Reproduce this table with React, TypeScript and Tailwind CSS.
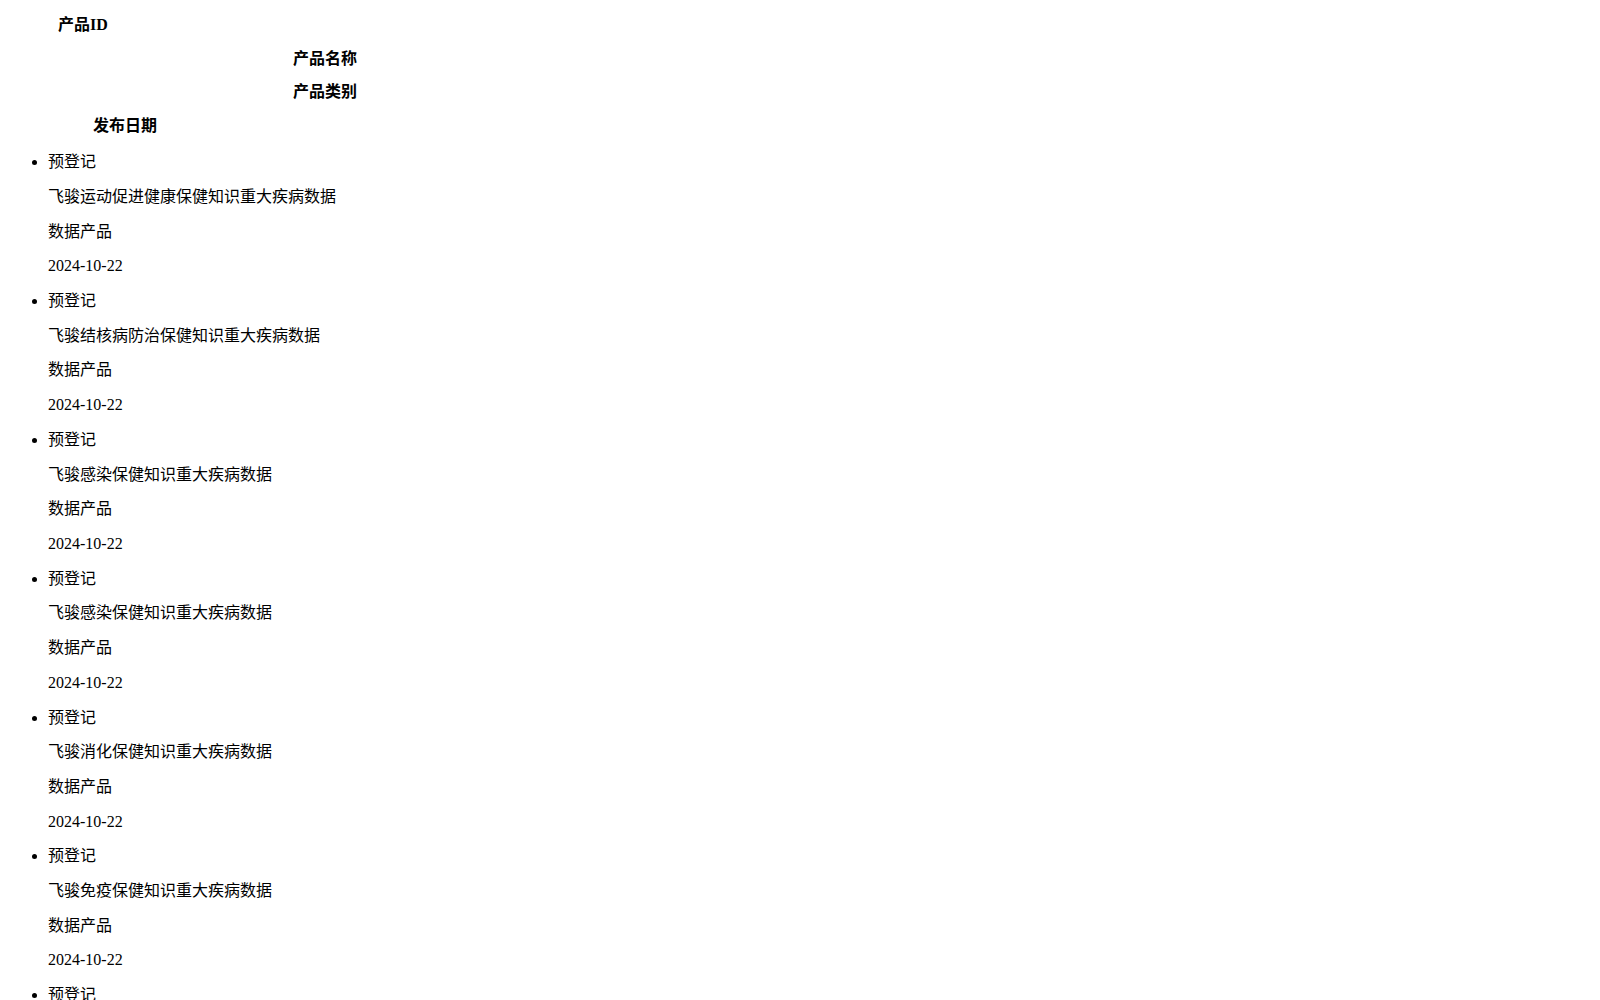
import React from "react";

type Product = {
  status: string;
  name: string;
  category: string;
  date: string;
};

const NAMES = [
  "飞骏运动促进健康保健知识重大疾病数据",
  "飞骏结核病防治保健知识重大疾病数据",
  "飞骏感染保健知识重大疾病数据",
  "飞骏感染保健知识重大疾病数据",
  "飞骏消化保健知识重大疾病数据",
  "飞骏免疫保健知识重大疾病数据",
  "飞骏心血管保健知识重大疾病数据",
  "飞骏呼吸保健知识重大疾病数据",
  "飞骏肿瘤保健知识重大疾病数据",
  "飞骏内分泌保健知识重大疾病数据",
  "飞骏神经保健知识重大疾病数据",
  "飞骏肾脏保健知识重大疾病数据",
  "飞骏眼科保健知识重大疾病数据",
  "飞骏口腔保健知识重大疾病数据",
  "飞骏皮肤保健知识重大疾病数据",
  "飞骏妇幼保健知识重大疾病数据",
  "飞骏老年保健知识重大疾病数据",
  "飞骏营养保健知识重大疾病数据",
  "飞骏心理保健知识重大疾病数据",
  "飞骏骨科保健知识重大疾病数据",
  "飞骏血液保健知识重大疾病数据",
  "飞骏肝病保健知识重大疾病数据",
  "飞骏传染病保健知识重大疾病数据",
  "飞骏慢病管理保健知识重大疾病数据",
];

const products: Product[] = NAMES.map((name) => ({
  status: "预登记",
  name,
  category: "数据产品",
  date: "2024-10-22",
}));

const font = "font-['Liberation_Serif','Noto_Sans_CJK_SC',serif]";

export default function App() {
  return (
    <div
      className={`h-screen overflow-y-scroll bg-white text-black text-[16px] ${font} [&::-webkit-scrollbar]:w-[15px] [&::-webkit-scrollbar-track]:bg-[#f1f1f1] [&::-webkit-scrollbar-thumb]:bg-[#c1c1c1] [&::-webkit-scrollbar-thumb]:border-x-[2px] [&::-webkit-scrollbar-thumb]:border-solid [&::-webkit-scrollbar-thumb]:border-[#f1f1f1]`}
    >
      {/* header labels */}
      <div className="pt-[8px] font-bold">
        <div className="h-[33.7px] leading-[33.7px] pl-[58px]">产品ID</div>
        <div className="h-[33.7px] leading-[33.7px] pl-[293px]">产品名称</div>
        <div className="h-[33.7px] leading-[33.7px] pl-[293px]">产品类别</div>
        <div className="h-[33.7px] leading-[33.7px] pl-[93px]">发布日期</div>
      </div>

      {/* product list */}
      <ul className="list-disc ml-2 pl-10 mt-[2.5px] pb-6">
        {products.map((p, i) => (
          <li key={i}>
            <p className="leading-[34.7px]">{p.status}</p>
            <p className="leading-[34.7px]">{p.name}</p>
            <p className="leading-[34.7px]">{p.category}</p>
            <p className="leading-[34.7px]">{p.date}</p>
          </li>
        ))}
      </ul>
    </div>
  );
}
